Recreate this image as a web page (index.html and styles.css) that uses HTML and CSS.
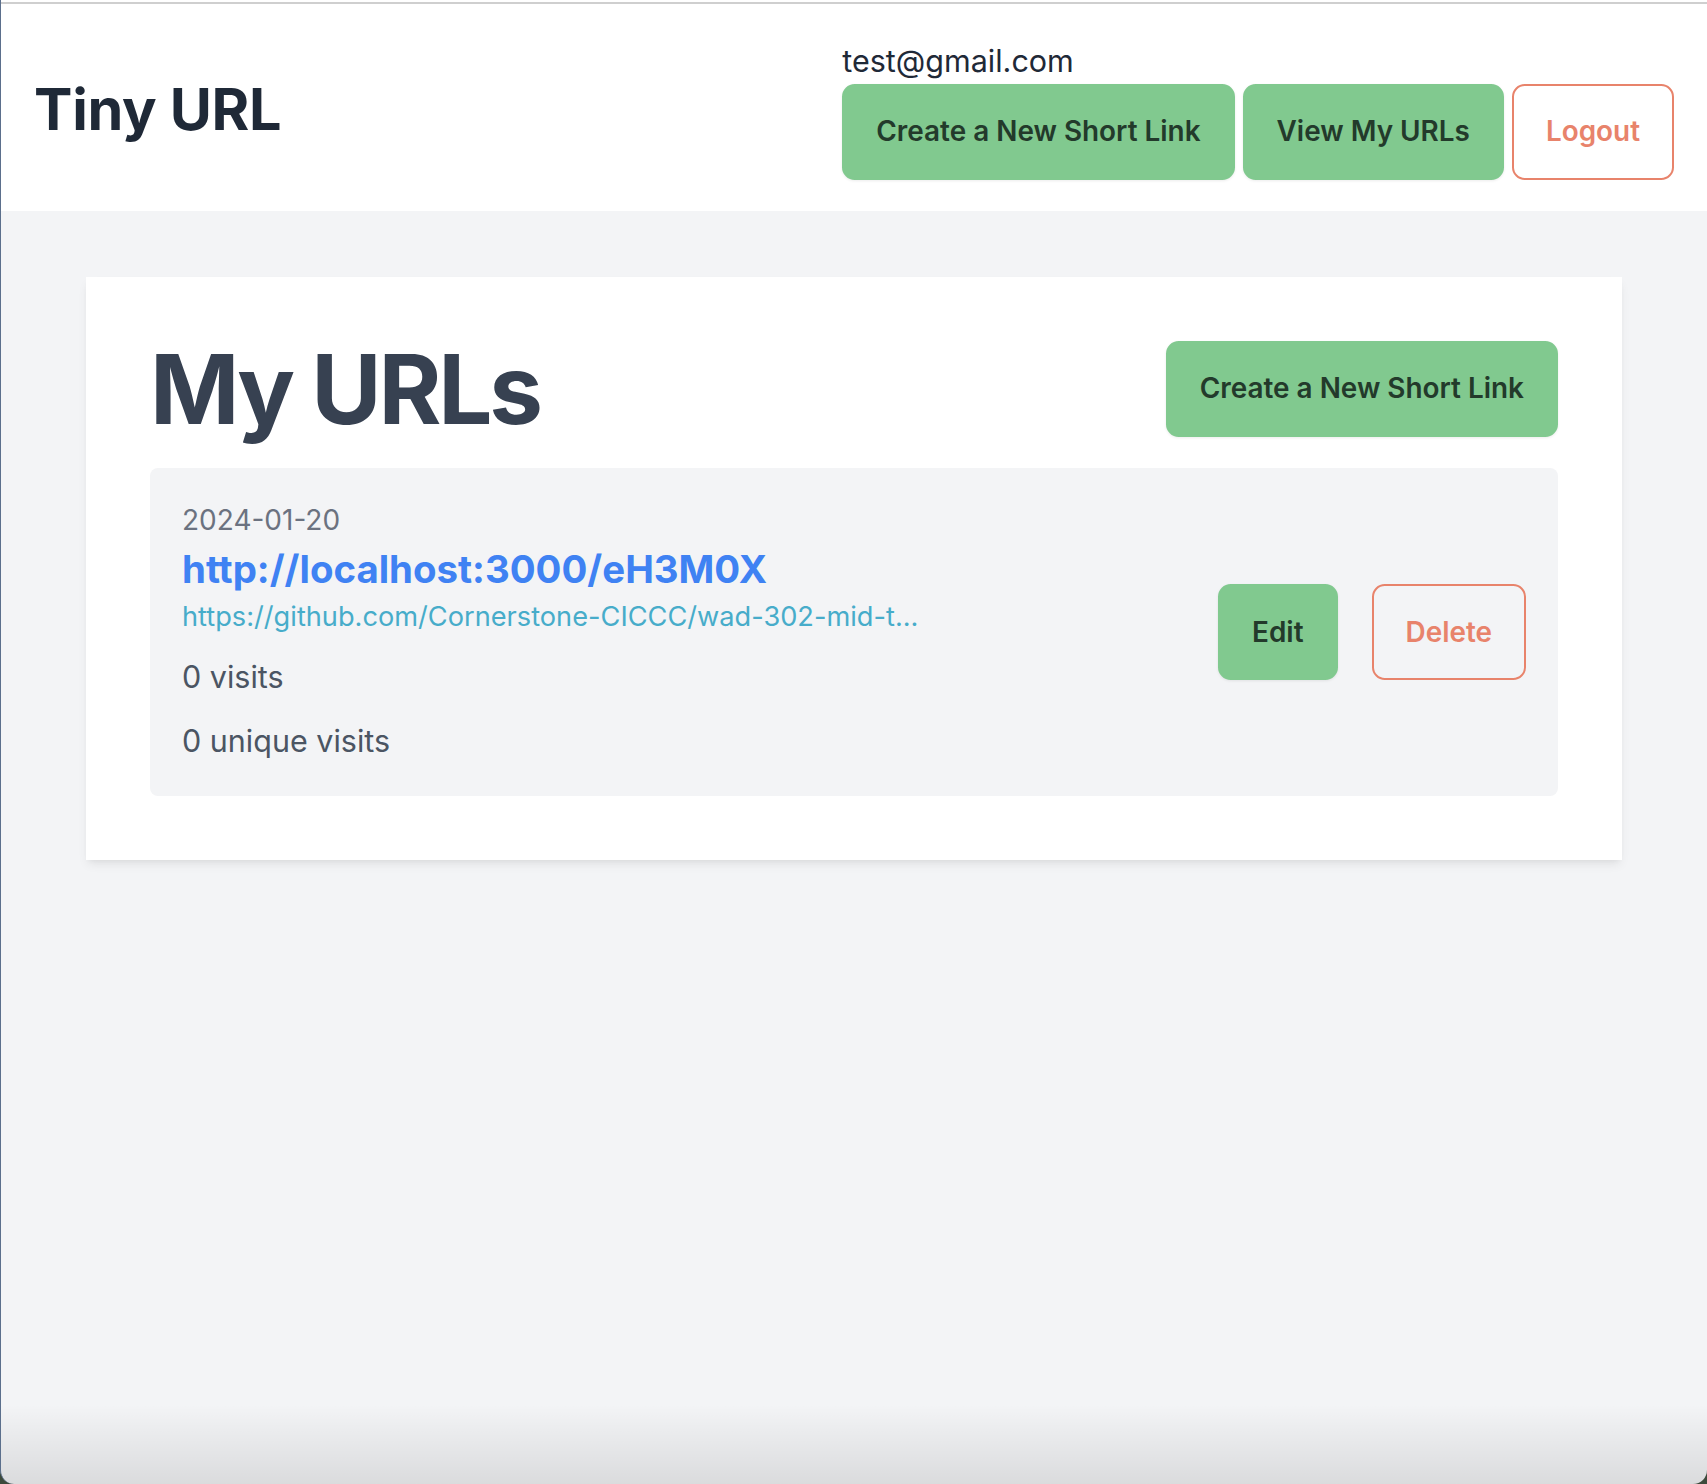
FILE: index.html
```html
<!DOCTYPE html>
<html lang="en">
<head>
<meta charset="utf-8">
<title>Tiny URL</title>
<link rel="stylesheet" href="styles.css">
</head>
<body>
<div class="window">
  <div class="chrome-line"></div>
  <header class="topbar">
    <h1 class="brand">Tiny URL</h1>
    <div class="account">
      <div class="email">test@gmail.com</div>
      <nav class="nav">
        <a class="btn btn-green" href="#">Create a New Short Link</a>
        <a class="btn btn-green" href="#">View My URLs</a>
        <a class="btn btn-outline" href="#">Logout</a>
      </nav>
    </div>
  </header>
  <main class="main">
    <section class="card">
      <div class="card-head">
        <h2 class="title">My URLs</h2>
        <a class="btn btn-green" href="#">Create a New Short Link</a>
      </div>
      <div class="url-item">
        <div class="url-info">
          <div class="date">2024-01-20</div>
          <a class="short" href="#">http://localhost:3000/eH3M0X</a>
          <a class="long" href="#">https://github.com/Cornerstone-CICCC/wad-302-mid-t...</a>
          <p class="visits">0 visits</p>
          <p class="visits unique">0 unique visits</p>
        </div>
        <div class="url-actions">
          <a class="btn btn-green" href="#">Edit</a>
          <a class="btn btn-outline" href="#">Delete</a>
        </div>
      </div>
    </section>
  </main>
</div>
</body>
</html>
```
FILE: styles.css
```css
* { box-sizing: border-box; }
html { background: #3d4a3c; }
body {
  margin: 0;
  font-family: Inter, "Noto Sans", "Liberation Sans", sans-serif;
}
.window {
  position: relative;
  min-height: 1484px;
  background: #f3f4f6;
  border-left: 1px solid #5b6f8c;
  border-radius: 0 0 14px 14px;
  overflow: hidden;
}
.window::after {
  content: "";
  position: absolute;
  left: 0; right: 0; bottom: 0;
  height: 80px;
  background: linear-gradient(to bottom, rgba(0,0,0,0), rgba(0,0,0,0.1));
  pointer-events: none;
}
.chrome-line {
  height: 4px;
  border-top: 2px solid #ffffff;
  background: #cfcfcf;
}
.topbar {
  background: #ffffff;
  display: flex;
  justify-content: space-between;
  align-items: center;
  padding: 35px 33px 31px 33px;
}
.brand {
  margin: 0;
  font-size: 57.6px;
  line-height: 64px;
  font-weight: 700;
  color: #1f2937;
  letter-spacing: -0.3px;
}
.account { display: flex; flex-direction: column; }
.email {
  font-size: 30.5px;
  line-height: 44.8px;
  color: #1f2937;
}
.nav { display: flex; gap: 8px; }
.btn {
  display: inline-block;
  text-decoration: none;
  font-size: 27.9px;
  line-height: 44.8px;
  font-weight: 600;
  padding: 23.6px 32px;
  border: 2px solid transparent;
  border-radius: 12.8px;
  white-space: nowrap;
}
.btn-green {
  background: #81c98f;
  border-color: #81c98f;
  color: #233a2b;
  box-shadow: 0 1px 3px rgba(0,0,0,0.08);
}
.btn-outline {
  background: transparent;
  border-color: #e8836b;
  color: #e8836b;
}
.main { padding: 66px 0; }
.card {
  width: 1536px;
  margin: 0 auto;
  background: #ffffff;
  padding: 64px;
  box-shadow: 0 6px 10px -2px rgba(0,0,0,0.08), 0 3px 6px -3px rgba(0,0,0,0.06);
}
.card-head {
  display: flex;
  justify-content: space-between;
  align-items: flex-start;
}
.title {
  margin: 0;
  font-size: 96px;
  line-height: 96px;
  font-weight: 700;
  color: #374151;
  letter-spacing: -3.2px;
}
.url-item {
  margin-top: 31px;
  background: #f3f4f6;
  border-radius: 8px;
  padding: 33px 32px 32px;
  display: flex;
  justify-content: space-between;
  align-items: center;
}
.url-info { display: flex; flex-direction: column; align-items: flex-start; }
.date {
  font-size: 28px;
  line-height: 38px;
  color: #6b7280;
}
.short {
  margin-top: 4px;
  font-size: 38.4px;
  line-height: 52px;
  font-weight: 700;
  color: #3f82f3;
  text-decoration: none;
}
.long {
  font-size: 27.2px;
  line-height: 44px;
  color: #47acca;
  text-decoration: none;
}
.visits {
  margin: 15px 0 0;
  font-size: 30.5px;
  line-height: 46px;
  color: #4b5563;
}
.unique { margin-top: 18px; }
.url-actions { display: flex; gap: 34px; }
```
